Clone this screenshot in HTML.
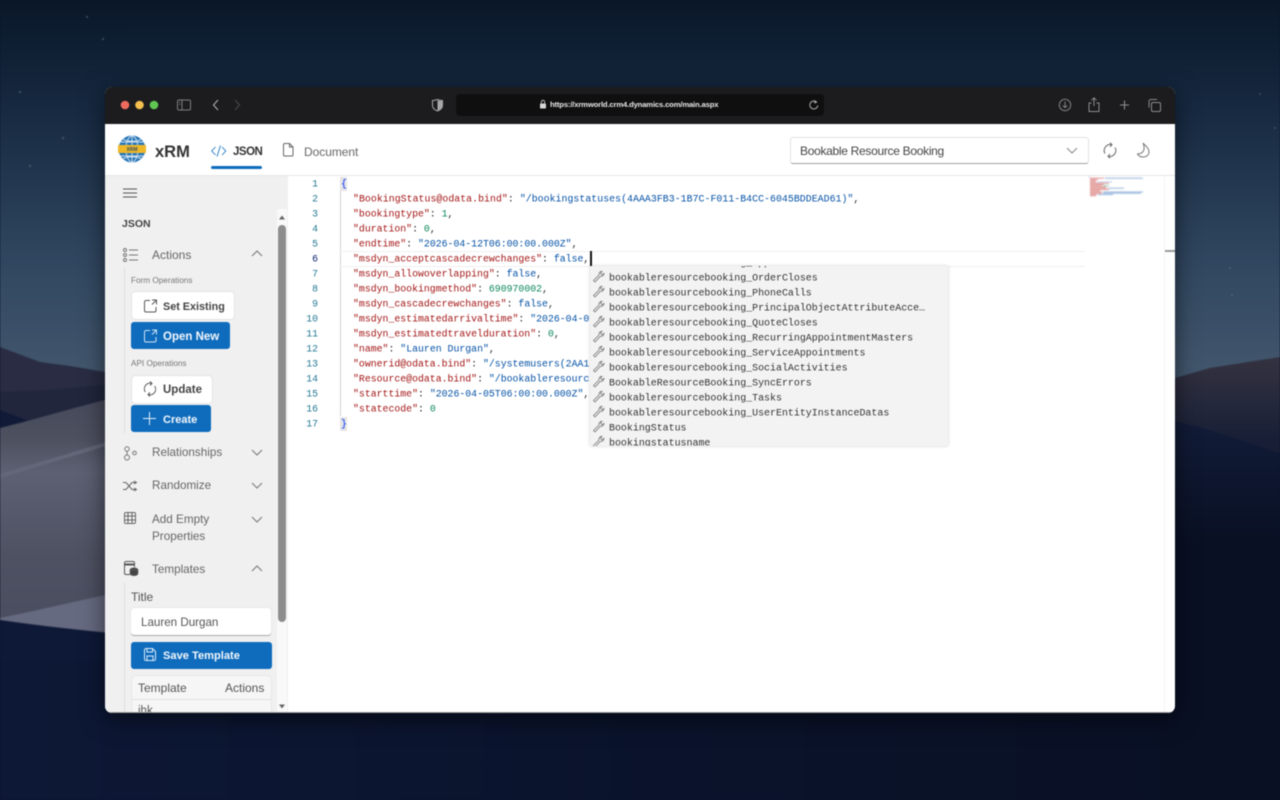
<!DOCTYPE html>
<html><head><meta charset="utf-8"><style>
html,body{margin:0;padding:0;width:1280px;height:800px;overflow:hidden;background:#0b1430}
*{box-sizing:border-box}
#bg{position:absolute;left:0;top:0;filter:blur(.8px)}
#win{position:absolute;left:105px;top:87px;width:1070px;height:626px;border-radius:7px;overflow:hidden;background:#fff;box-shadow:0 6px 24px rgba(0,0,0,.55);font-family:"Liberation Sans",sans-serif;filter:blur(.42px)}
#win>div,#win>svg,.a{position:absolute}
.t{position:absolute;white-space:nowrap;line-height:16px}
.code{position:absolute;left:248px;font:9.85px/15px "Liberation Mono",monospace;white-space:pre;height:15px;transform:translateY(.5px)}
.ln{position:absolute;left:184px;width:29px;text-align:right;font:9.8px/15px "Liberation Mono",monospace;color:#237893;transform:translateY(.5px)}
.k{color:#a31515}.s{color:#0451a5}.n{color:#098658}.p{color:#222}
.it{position:absolute;left:19px;font:9.95px/15px "Liberation Mono",monospace;color:#333;white-space:pre;height:15px;transform:translateY(.5px)}
.btn{position:absolute;border-radius:3px;height:27px}
.w{background:#fff;box-shadow:0 0 1px rgba(0,0,0,.3)}
.b{background:#0f6cbd}
.g{font-size:12px;color:#666}
svg{overflow:visible}
</style></head><body>
<svg id="bg" width="1280" height="800" viewBox="0 0 1280 800">
<defs>
<linearGradient id="sky" gradientUnits="userSpaceOnUse" x1="0" y1="0" x2="0" y2="400"><stop offset="0" stop-color="#091728"/><stop offset=".3" stop-color="#182b43"/><stop offset=".65" stop-color="#30465f"/><stop offset="1" stop-color="#465a70"/></linearGradient>
<linearGradient id="dune" gradientUnits="userSpaceOnUse" x1="0" y1="400" x2="0" y2="640"><stop offset="0" stop-color="#46495a"/><stop offset=".16" stop-color="#4c505f"/><stop offset=".3" stop-color="#5c6072"/><stop offset=".65" stop-color="#4e5162"/><stop offset="1" stop-color="#494c5e"/></linearGradient>
<linearGradient id="nav" gradientUnits="userSpaceOnUse" x1="0" y1="0" x2="1280" y2="0"><stop offset="0" stop-color="#0d1836"/><stop offset=".5" stop-color="#0a132b"/><stop offset="1" stop-color="#091024"/></linearGradient>
<linearGradient id="mtr" gradientUnits="userSpaceOnUse" x1="0" y1="360" x2="0" y2="440"><stop offset="0" stop-color="#33313f"/><stop offset=".6" stop-color="#23273b"/><stop offset="1" stop-color="#171e35"/></linearGradient>
<linearGradient id="rd" gradientUnits="userSpaceOnUse" x1="0" y1="420" x2="0" y2="540"><stop offset="0" stop-color="#121c38"/><stop offset="1" stop-color="#091024"/></linearGradient>
</defs>
<rect width="1280" height="420" fill="url(#sky)"/>
<rect y="380" width="1280" height="420" fill="url(#nav)"/>
<path d="M0 347L40 362 70 366 105 372 120 372V440H0Z" fill="#292c43"/>
<path d="M0 392L50 390 105 385 120 385V430H0Z" fill="#21263d"/>
<path d="M0 410L40 425 0 432Z" fill="#111a36"/>
<path d="M1160 382L1175 378 1210 368 1280 357V470H1160Z" fill="url(#mtr)"/>
<path d="M1160 418C1210 428 1250 443 1280 454V800H1160Z" fill="url(#rd)"/>
<path d="M0 428C40 418 80 406 120 396V636H0Z" fill="url(#dune)"/>
<path d="M0 474C40 462 80 450 120 438L120 442C80 454 40 466 0 478Z" fill="#636779"/>
<path d="M0 618C40 610 80 600 120 592V634C80 630 40 626 0 620Z" fill="#666a80"/>
<path d="M0 620C40 626 80 630 120 634V660H0Z" fill="#0e1937"/>
<g fill="#8d9db0" opacity=".6"><circle cx="87" cy="17" r=".9"/><circle cx="103" cy="39" r=".9"/><circle cx="20" cy="92" r=".9"/><circle cx="63" cy="138" r=".9"/><circle cx="30" cy="166" r=".9"/><circle cx="1260" cy="94" r=".7"/><circle cx="1275" cy="128" r=".7"/><circle cx="1230" cy="268" r=".7"/><circle cx="1232" cy="295" r=".7"/></g>
</svg>

<div id="win">
<!-- title bar -->
<div style="left:0;top:0;width:1070px;height:37px;background:#1c1c1e"></div>
<svg style="left:0;top:0" width="1070" height="37" fill="none">
<circle cx="20" cy="18" r="4.3" fill="#ed6a5e"/><circle cx="34.500" cy="18" r="4.3" fill="#f4bf4f"/><circle cx="49" cy="18" r="4.3" fill="#61c554"/>
<rect x="72.500" y="13" width="13" height="10" rx="1.500" stroke="#7e7e80"/><path d="M77 13v10" stroke="#7e7e80"/><path d="M74 15.500h1.500M74 17.500h1.500" stroke="#7e7e80" stroke-width=".7"/>
<path d="M113 13l-4.500 5 4.500 5" stroke="#a5a5a7" stroke-width="1.200"/><path d="M130 13l4.500 5-4.500 5" stroke="#454547" stroke-width="1.200"/>
<path d="M332.500 12.500c2 .8 3.500 1 5 1v5c0 3-2.500 4.500-5 5.500-2.500-1-5-2.500-5-5.500v-5c1.500 0 3-.2 5-1z" stroke="#a8a8aa"/><path d="M332.500 13v10.500c2-1 4.500-2 4.500-5v-4.500c-1.500 0-3-.2-4.500-.5z" fill="#a8a8aa"/>
<rect x="351" y="7" width="368" height="22" rx="4" fill="#0f0f10"/>
<rect x="435" y="16.500" width="6" height="5" rx=".8" fill="#d8d8d8"/><path d="M436.300 16.500v-1.500a1.700 1.700 0 013.400 0v1.500" stroke="#d8d8d8" stroke-width=".8"/>
<path d="M712 15.500a4 4 0 10.800 3" stroke="#a8a8aa" stroke-width="1"/><path d="M709.500 13l2.700 2.500-3 1z" fill="#a8a8aa"/>
<circle cx="960" cy="18" r="5.700" stroke="#808082"/><path d="M960 14.500v6M957.800 18.500l2.200 2.200 2.200-2.200" stroke="#808082"/>
<path d="M986.500 16h-2.500v8.500h10V16h-2.500M989 19V11M986.500 13.300l2.500-2.500 2.500 2.500" stroke="#8c8c8e"/>
<path d="M1019.500 13.500v9M1015 18h9" stroke="#8c8c8e" stroke-width="1.100"/>
<rect x="1046.500" y="15.500" width="9" height="9" rx="1.500" stroke="#8c8c8e"/><path d="M1044 20.500v-6a2 2 0 012-2h6" stroke="#8c8c8e"/>
</svg>
<div class="t" style="left:445px;top:10px;color:#e8e8e8;font-size:7.650px;font-weight:bold;letter-spacing:-.15px">https://xrmworld.crm4.dynamics.com/main.aspx</div>

<!-- header -->
<div style="left:0;top:37px;width:1070px;height:52px;background:#fff;border-bottom:1px solid #e6e6e6"></div>
<svg style="left:13px;top:48px" width="28" height="28" viewBox="0 0 28 28" fill="none">
<circle cx="14" cy="14" r="13.500" fill="#2a78b8"/>
<g stroke="#cfe3f2" stroke-width=".9"><ellipse cx="14" cy="14" rx="6" ry="13"/><path d="M14 1v26M2 7h24M2 21h24M4 4c6 3 14 3 20 0M4 24c6-3 14-3 20 0"/></g>
<rect x="0" y="10" width="28" height="8" fill="#efb828"/><text x="14" y="16" text-anchor="middle" font-size="5" font-weight="bold" fill="#35506a" font-family="Liberation Sans">XRM</text>
</svg>
<div class="t" style="left:50px;top:57px;font-size:16.500px;font-weight:bold;color:#333">xRM</div>
<svg style="left:106px;top:57px" width="16" height="14" fill="none" stroke="#1b78c4" stroke-width=".9"><path d="M4.500 3L.7 7l3.800 4M11 3l3.800 4-3.800 4M9.500 1.500L6 12.500"/></svg>
<div class="t" style="left:128px;top:57px;font-size:11.500px;color:#333;font-weight:bold;letter-spacing:-.5px">JSON</div>
<div style="left:106px;top:79px;width:51px;height:2.500px;background:#0f6cbd;border-radius:2px"></div>
<svg style="left:178px;top:56px" width="11" height="14" fill="none" stroke="#666"><path d="M.5 1.500a1 1 0 011-1h5l3.500 3.500v8a1 1 0 01-1 1h-7.500a1 1 0 01-1-1zM6.500.5v3.500h3.500"/></svg>
<div class="t" style="left:199px;top:57px;font-size:12px;color:#666;letter-spacing:-.05px">Document</div>
<div style="left:685px;top:50px;width:299px;height:27px;background:#fff;border:1px solid #e2e2e2;border-bottom-color:#a0a0a0;border-radius:3px"></div>
<div class="t" style="left:695px;top:56px;font-size:12px;color:#444;letter-spacing:-.3px">Bookable Resource Booking</div>
<svg style="left:960px;top:60px" width="14" height="8" fill="none" stroke="#888"><path d="M2 1l5 5 5-5"/></svg>
<svg style="left:997px;top:55px" width="16" height="17" fill="none" stroke="#666"><path d="M3 11.500A6 6 0 0110 2.800M13 5.500A6 6 0 016 14.200"/><path d="M8 .7l2 2.100-2 2.100M8 12.100l-2 2.100 2 2.100"/></svg>
<svg style="left:1031px;top:55px" width="15" height="16" fill="none" stroke="#777"><path d="M7 1c2.500 3 6 5 6 9 0 3-2.500 5-6 5-2.500 0-4.500-1-5.500-3 3.500 0 6-2 6.500-4.500C8.300 5 8 3 7 1z"/></svg>

<!-- sidebar -->
<div style="left:0;top:89px;width:183px;height:537px;background:#f0f0f0"></div>
<svg style="left:18px;top:101px" width="14" height="10" stroke="#555" stroke-width="1.100"><path d="M0 1h14M0 5h14M0 9h14"/></svg>
<div class="t" style="left:17px;top:129px;font-size:10.500px;font-weight:bold;color:#444">JSON</div>

<svg style="left:18px;top:161px" width="15" height="14" fill="none" stroke="#777"><circle cx="2" cy="2" r="1.500"/><circle cx="2" cy="7" r="1.500"/><circle cx="2" cy="12" r="1.500"/><path d="M6 2h9M6 7h9M6 12h9"/></svg>
<div class="t g" style="left:47px;top:160px">Actions</div>
<svg style="left:146px;top:163px" width="12" height="8" fill="none" stroke="#777"><path d="M1 6l5-5 5 5"/></svg>
<div style="left:19px;top:181px;width:1px;height:165px;background:#ddd"></div>
<div class="t" style="left:26px;top:186px;font-size:8.200px;color:#777">Form Operations</div>
<div class="btn w" style="left:27px;top:205px;width:102px"></div>
<svg style="left:39px;top:212px" width="13" height="14" fill="none" stroke="#555"><path d="M6 1.500H2a1.500 1.500 0 00-1.500 1.500v8.500A1.500 1.500 0 002 13h8.500a1.500 1.500 0 001.500-1.500V8M8 1h4.500v4.500M12.500 1L8 5.500"/></svg>
<div class="t" style="left:58px;top:212px;font-size:10.800px;font-weight:bold;color:#444">Set Existing</div>
<div class="btn b" style="left:26px;top:235px;width:99px"></div>
<svg style="left:39px;top:242px" width="13" height="14" fill="none" stroke="#cfe3f5"><path d="M6 1.500H2a1.500 1.500 0 00-1.500 1.500v8.500A1.500 1.500 0 002 13h8.500a1.500 1.500 0 001.500-1.500V8M8 1h4.500v4.500M12.500 1L8 5.500"/></svg>
<div class="t" style="left:58px;top:242px;font-size:11.500px;font-weight:bold;color:#f2f7fc">Open New</div>
<div class="t" style="left:26px;top:269px;font-size:8.200px;color:#777">API Operations</div>
<div class="btn w" style="left:27px;top:289px;width:80px"></div>
<svg style="left:38px;top:294px" width="14" height="16" fill="none" stroke="#555"><path d="M2.300 11A5.700 5.700 0 019 2.500M11.700 5A5.700 5.700 0 015 13.500"/><path d="M7 .5l2 2-2 2M7 11.500l-2 2 2 2"/></svg>
<div class="t" style="left:58px;top:295px;font-size:11.500px;font-weight:bold;color:#444">Update</div>
<div class="btn b" style="left:26px;top:318px;width:80px"></div>
<svg style="left:38px;top:325px" width="13" height="13" stroke="#e3eef8" stroke-width="1"><path d="M6.500 0v13M0 6.500h13"/></svg>
<div class="t" style="left:58px;top:325px;font-size:11px;font-weight:bold;color:#f2f7fc">Create</div>

<svg style="left:19px;top:359px" width="13" height="15" fill="none" stroke="#777"><circle cx="3" cy="3" r="2.200"/><circle cx="3" cy="11.500" r="2.500"/><circle cx="10.500" cy="7" r="1.800"/><path d="M3 5.200v3.800"/></svg>
<div class="t g" style="left:47px;top:358px;font-size:11.700px">Relationships</div>
<svg style="left:146px;top:362px" width="12" height="8" fill="none" stroke="#777"><path d="M1 1l5 5 5-5"/></svg>
<svg style="left:18px;top:394px" width="14" height="11" fill="none" stroke="#666"><path d="M0 1.500h3l6 7h4M0 8.500h3l6-7h4M11 0l2.500 1.500L11 3M11 7l2.500 1.500L11 10"/></svg>
<div class="t g" style="left:47px;top:391px;font-size:11.700px">Randomize</div>
<svg style="left:146px;top:395px" width="12" height="8" fill="none" stroke="#777"><path d="M1 1l5 5 5-5"/></svg>
<svg style="left:19px;top:425px" width="12" height="12" fill="none" stroke="#666"><rect x=".5" y=".5" width="11" height="11" rx="1.500"/><path d="M.5 4h11M.5 8h11M4 .5v11M8 .5v11"/></svg>
<div class="t g" style="left:47px;top:425px;font-size:11.700px">Add Empty</div>
<div class="t g" style="left:47px;top:442px;font-size:11.700px">Properties</div>
<svg style="left:146px;top:429px" width="12" height="8" fill="none" stroke="#777"><path d="M1 1l5 5 5-5"/></svg>
<svg style="left:19px;top:474px" width="14" height="15" fill="none" stroke="#555"><path d="M6 13.500H2A1.500 1.500 0 01.500 12V2A1.500 1.500 0 012 .5h7A1.500 1.500 0 0110.500 2v4" /><path d="M.5 3.500h10" stroke-width="2"/><ellipse cx="10" cy="9" rx="3.800" ry="2" fill="#444"/><path d="M6.200 9v3.500c0 1 1.700 2 3.800 2s3.800-1 3.800-2V9z" fill="#444"/></svg>
<div class="t g" style="left:47px;top:475px;font-size:11.700px">Templates</div>
<svg style="left:146px;top:478px" width="12" height="8" fill="none" stroke="#777"><path d="M1 6l5-5 5 5"/></svg>
<div style="left:19px;top:495px;width:1px;height:131px;background:#ddd"></div>
<div class="t" style="left:26px;top:502px;font-size:12px;color:#555">Title</div>
<div class="a" style="left:26px;top:521px;width:140px;height:27px;background:#fff;border-radius:3px;box-shadow:0 1px 0 #aaa,0 0 1px rgba(0,0,0,.2)"></div>
<div class="t" style="left:36px;top:528px;font-size:11.600px;color:#555">Lauren Durgan</div>
<div class="btn b" style="left:26px;top:555px;width:141px"></div>
<svg style="left:39px;top:561px" width="12" height="13" fill="none" stroke="#dcebf8"><path d="M.5 2A1.500 1.500 0 012 .5h6.500L11.500 3.500v7.500a1.500 1.500 0 01-1.500 1.500H2A1.500 1.500 0 01.5 11zM3 .5v3.500h5.500V.5M3 12.500V8h6v4.500"/></svg>
<div class="t" style="left:58px;top:561px;font-size:11.100px;font-weight:bold;color:#f2f7fc">Save Template</div>
<div class="a" style="left:27px;top:589px;width:139px;height:37px;background:#f6f6f6;box-shadow:0 0 1px rgba(0,0,0,.25);border-radius:3px 3px 0 0"></div>
<div class="a" style="left:27px;top:612px;width:139px;height:1px;background:#e0e0e0"></div>
<div class="t" style="left:33px;top:593px;font-size:12px;color:#555">Template</div>
<div class="t" style="left:120px;top:593px;font-size:12px;color:#555">Actions</div>
<div class="t" style="left:33px;top:616px;font-size:11.500px;color:#555">ihk</div>
<!-- sidebar scrollbar -->
<div style="left:172px;top:122px;width:10px;height:504px;background:#f9f9f9"></div>
<div style="left:173px;top:138px;width:8px;height:397px;background:#8d8d8d;border-radius:4px"></div>
<svg style="left:174px;top:128px" width="6" height="5" fill="#666"><path d="M3 .5L6 4.500H0z"/></svg>
<svg style="left:174px;top:617px" width="6" height="5" fill="#666"><path d="M0 .5h6L3 4.500z"/></svg>

<!-- editor -->
<div style="left:235px;top:103px;width:1px;height:226px;background:#d3d3d3"></div>
<div style="left:235px;top:164px;width:745px;height:16px;border-top:1px solid #eee;border-bottom:1px solid #eee"></div>
<div style="left:235px;top:90px;width:7px;height:14px;background:#e4e4e4"></div>
<div style="left:235px;top:330px;width:7px;height:14px;background:#e4e4e4"></div>
<div class="ln" style="top:89px">1</div><div class="ln" style="top:104px">2</div><div class="ln" style="top:119px">3</div><div class="ln" style="top:134px">4</div><div class="ln" style="top:149px">5</div><div class="ln" style="top:164px;color:#0b216f">6</div><div class="ln" style="top:179px">7</div><div class="ln" style="top:194px">8</div><div class="ln" style="top:209px">9</div><div class="ln" style="top:224px">10</div><div class="ln" style="top:239px">11</div><div class="ln" style="top:254px">12</div><div class="ln" style="top:269px">13</div><div class="ln" style="top:284px">14</div><div class="ln" style="top:299px">15</div><div class="ln" style="top:314px">16</div><div class="ln" style="top:329px">17</div>

<div class="code" style="left:236px;top:89px;color:#0431fa">{</div>
<div class="code" style="top:104px;letter-spacing:.05px"><span class="k">"BookingStatus@odata.bind"</span><span class="p">: </span><span class="s">"/bookingstatuses(4AAA3FB3-1B7C-F011-B4CC-6045BDDEAD61)"</span><span class="p">,</span></div>
<div class="code" style="top:119px"><span class="k">"bookingtype"</span><span class="p">: </span><span class="n">1</span><span class="p">,</span></div>
<div class="code" style="top:134px"><span class="k">"duration"</span><span class="p">: </span><span class="n">0</span><span class="p">,</span></div>
<div class="code" style="top:149px"><span class="k">"endtime"</span><span class="p">: </span><span class="s">"2026-04-12T06:00:00.000Z"</span><span class="p">,</span></div>
<div class="code" style="top:164px"><span class="k">"msdyn_acceptcascadecrewchanges"</span><span class="p">: </span><span class="s">false</span><span class="p">,</span></div>
<div class="code" style="top:179px"><span class="k">"msdyn_allowoverlapping"</span><span class="p">: </span><span class="s">false</span><span class="p">,</span></div>
<div class="code" style="top:194px"><span class="k">"msdyn_bookingmethod"</span><span class="p">: </span><span class="n">690970002</span><span class="p">,</span></div>
<div class="code" style="top:209px"><span class="k">"msdyn_cascadecrewchanges"</span><span class="p">: </span><span class="s">false</span><span class="p">,</span></div>
<div class="code" style="top:224px"><span class="k">"msdyn_estimatedarrivaltime"</span><span class="p">: </span><span class="s">"2026-04-05T06:00:00.000Z"</span></div>
<div class="code" style="top:239px"><span class="k">"msdyn_estimatedtravelduration"</span><span class="p">: </span><span class="n">0</span><span class="p">,</span></div>
<div class="code" style="top:254px"><span class="k">"name"</span><span class="p">: </span><span class="s">"Lauren Durgan"</span><span class="p">,</span></div>
<div class="code" style="top:269px"><span class="k">"ownerid@odata.bind"</span><span class="p">: </span><span class="s">"/systemusers(2AA1B3C4-0000)"</span></div>
<div class="code" style="top:284px"><span class="k">"Resource@odata.bind"</span><span class="p">: </span><span class="s">"/bookableresources(4AAA3FB3)"</span></div>
<div class="code" style="top:299px"><span class="k">"starttime"</span><span class="p">: </span><span class="s">"2026-04-05T06:00:00.000Z"</span><span class="p">,</span></div>
<div class="code" style="top:314px"><span class="k">"statecode"</span><span class="p">: </span><span class="n">0</span></div>
<div class="code" style="left:236px;top:329px;color:#0431fa">}</div>
<div style="left:485px;top:164px;width:1.500px;height:15px;background:#111"></div>

<!-- suggest -->
<div id="sg" style="left:485px;top:179px;width:358px;height:180px;background:#f3f3f3;box-shadow:0 0 3px rgba(0,0,0,.2);overflow:hidden">
<div class="it" style="top:-11px">bookableresourcebooking_Appointments</div>
<div class="it" style="top:4px">bookableresourcebooking_OrderCloses</div>
<div class="it" style="top:19px">bookableresourcebooking_PhoneCalls</div>
<div class="it" style="top:34px">bookableresourcebooking_PrincipalObjectAttributeAcce…</div>
<div class="it" style="top:49px">bookableresourcebooking_QuoteCloses</div>
<div class="it" style="top:64px">bookableresourcebooking_RecurringAppointmentMasters</div>
<div class="it" style="top:79px">bookableresourcebooking_ServiceAppointments</div>
<div class="it" style="top:94px">bookableresourcebooking_SocialActivities</div>
<div class="it" style="top:109px">BookableResourceBooking_SyncErrors</div>
<div class="it" style="top:124px">bookableresourcebooking_Tasks</div>
<div class="it" style="top:139px">bookableresourcebooking_UserEntityInstanceDatas</div>
<div class="it" style="top:154px">BookingStatus</div>
<div class="it" style="top:169px">bookingstatusname</div>
<svg class="a" style="left:0;top:0" width="20" height="180" fill="none" stroke="#777" stroke-width=".8">
<defs><path id="wr" d="M5 16l-1.500-1.500 5.500-5.500c-.5-2 1-3.700 3-3.700l-1.500 2 1.500 1.500 2-1.500c0 2-1.700 3.500-3.700 3z"/></defs>
<use href="#wr" y="0"/><use href="#wr" y="15"/><use href="#wr" y="30"/><use href="#wr" y="45"/><use href="#wr" y="60"/><use href="#wr" y="75"/><use href="#wr" y="90"/><use href="#wr" y="105"/><use href="#wr" y="120"/><use href="#wr" y="135"/><use href="#wr" y="150"/><use href="#wr" y="165"/>
</svg>
</div>

<!-- minimap -->
<svg style="left:983px;top:89px;filter:blur(.4px)" width="60" height="22">
<g opacity=".75" stroke-width="1">
<path d="M1 1h1" stroke="#8a9bd8"/>
<path d="M2 2.200h14" stroke="#d6706c"/><path d="M17 2.200h38" stroke="#6f9cd0"/>
<path d="M2 3.500h8" stroke="#d6706c"/><path d="M2 4.700h6" stroke="#d6706c"/><path d="M2 6h6" stroke="#d6706c"/><path d="M9 6h15" stroke="#a7c0e0"/>
<path d="M2 7.200h19" stroke="#d6706c"/><path d="M2 8.500h14" stroke="#d6706c"/><path d="M2 9.700h12" stroke="#d6706c"/><path d="M15 9.700h6" stroke="#6fb99a"/><path d="M2 11h16" stroke="#d6706c"/><path d="M2 12.200h17" stroke="#d6706c"/><path d="M20 12.200h16" stroke="#6f9cd0"/>
<path d="M2 13.500h19" stroke="#d6706c"/><path d="M2 14.700h10" stroke="#d6706c"/><path d="M2 16h12" stroke="#d6706c"/><path d="M15 16h40" stroke="#6f9cd0"/><path d="M2 17.200h12" stroke="#d6706c"/><path d="M15 17.200h38" stroke="#6f9cd0"/><path d="M2 18.500h7" stroke="#d6706c"/><path d="M10 18.500h15" stroke="#6f9cd0"/><path d="M2 19.700h6" stroke="#d6706c"/>
</g></svg>
<div style="left:1059px;top:89px;width:1px;height:537px;background:#f4f4f4"></div>
<div style="left:1060px;top:163px;width:10px;height:2px;background:#999"></div>
<div style="left:0;bottom:0;width:1070px;height:1px;background:#999"></div>
</div>
</body></html>
